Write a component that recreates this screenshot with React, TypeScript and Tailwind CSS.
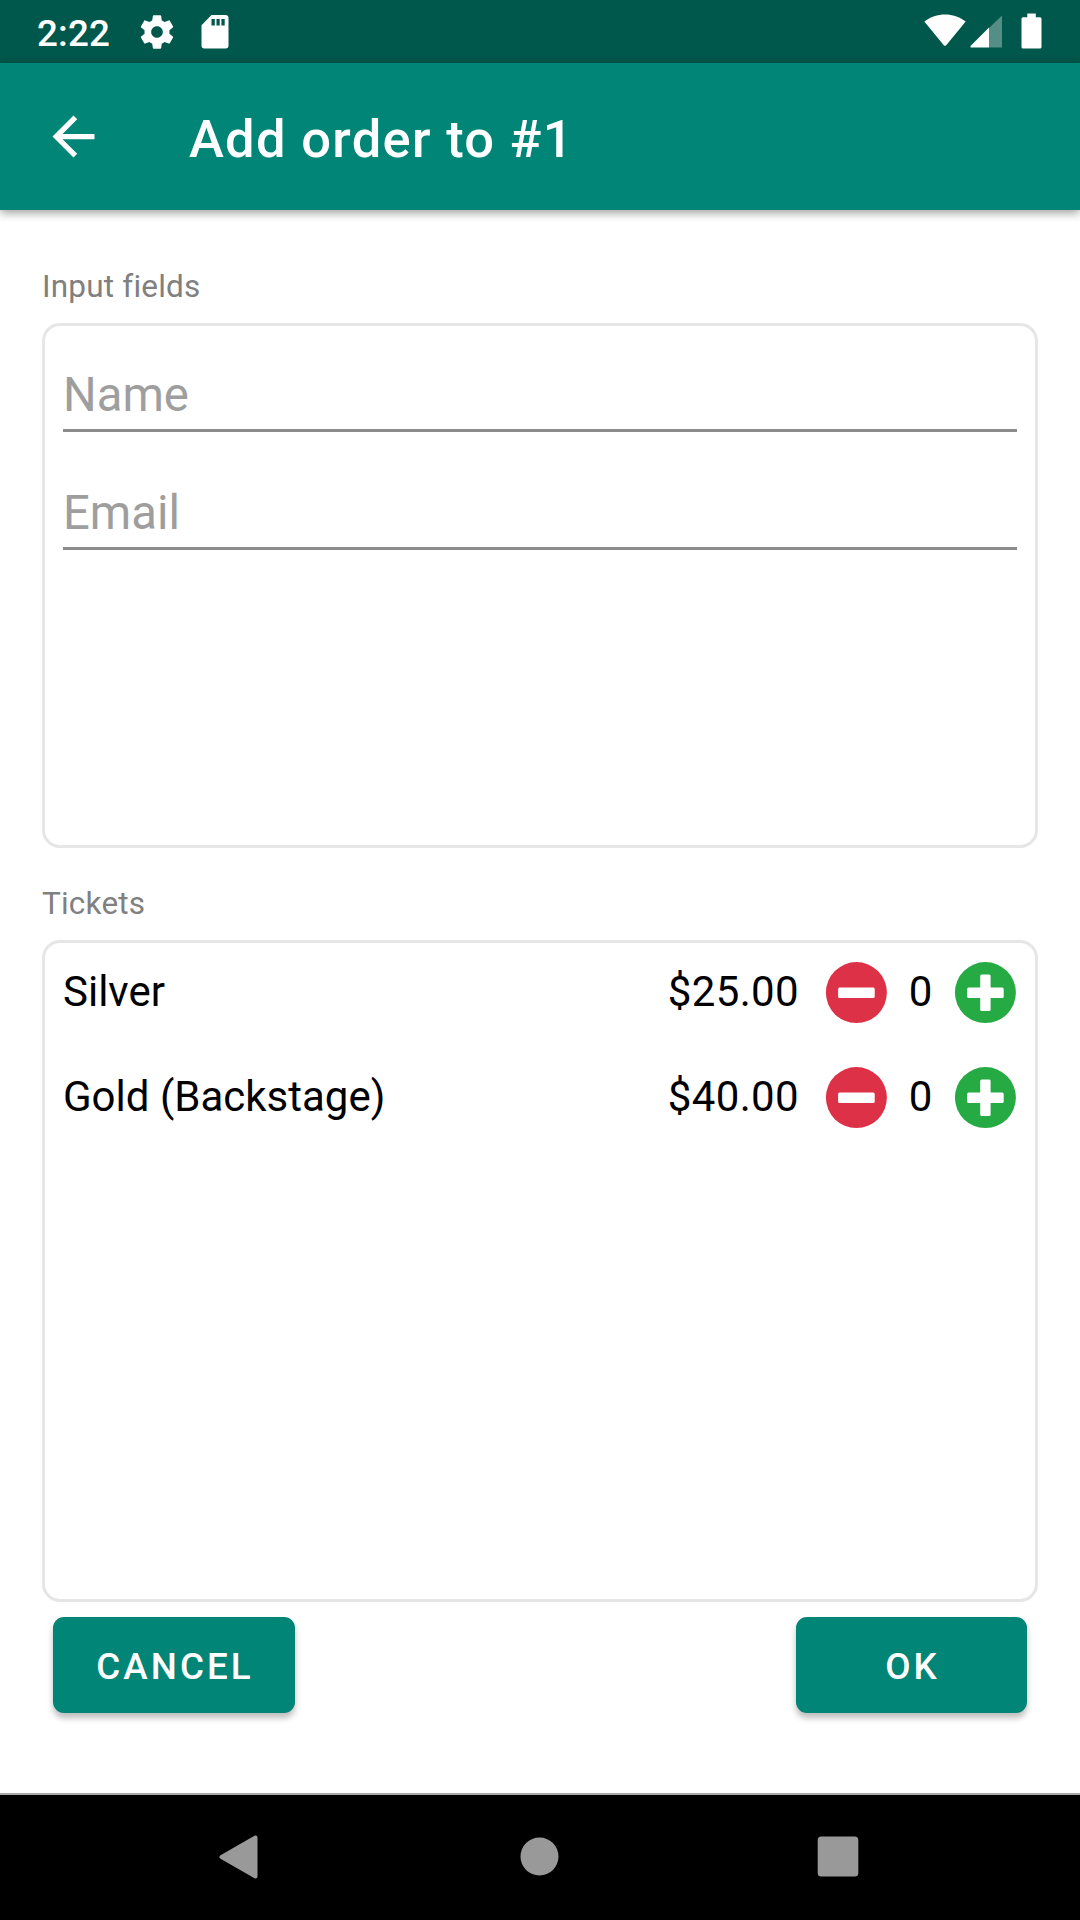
import React from "react";

const tickets = [
  { name: "Silver", price: "$25.00", count: 0 },
  { name: "Gold (Backstage)", price: "$40.00", count: 0 },
];

function StatusBar() {
  return (
    <div className="flex h-[63px] shrink-0 items-start bg-[#00574b] pr-[38px] pl-[37px] text-white">
      <span className="mt-[12px] w-[100px] text-[36.75px] leading-[43px] font-medium tracking-[0.2px]">2:22</span>
      <svg className="mt-[12px] h-[40px] w-[40px]" viewBox="0 0 24 24" fill="currentColor">
        <path d="M19.43 12.98c.04-.32.07-.64.07-.98s-.03-.66-.07-.98l2.11-1.65c.19-.15.24-.42.12-.64l-2-3.46c-.12-.22-.39-.3-.61-.22l-2.49 1c-.52-.4-1.08-.73-1.69-.98l-.38-2.65C14.46 2.18 14.25 2 14 2h-4c-.25 0-.46.18-.49.42l-.38 2.65c-.61.25-1.17.59-1.69.98l-2.49-1c-.23-.09-.49 0-.61.22l-2 3.46c-.13.22-.07.49.12.64l2.11 1.65c-.04.32-.07.65-.07.98s.03.66.07.98l-2.11 1.65c-.19.15-.24.42-.12.64l2 3.46c.12.22.39.3.61.22l2.49-1c.52.4 1.08.73 1.69.98l.38 2.65c.03.24.24.42.49.42h4c.25 0 .46-.18.49-.42l.38-2.65c.61-.25 1.17-.59 1.69-.98l2.49 1c.23.09.49 0 .61-.22l2-3.46c.12-.22.07-.49-.12-.64l-2.11-1.65zM12 15.500c-1.930 0-3.500-1.570-3.500-3.500s1.570-3.500 3.500-3.500 3.500 1.570 3.500 3.500-1.570 3.500-3.500 3.500z" />
      </svg>
      <svg className="mt-[15px] ml-[24px] h-[34px] w-[28px]" viewBox="0 0 28 34" fill="currentColor" fillRule="evenodd">
        <path d="M10.5 0H24.5Q27.5 0 27.5 3V30.500Q27.500 33.500 24.500 33.500H3.500Q.5 33.500 .5 30.500V10.300ZM10.500 4V10.500H13.800V4ZM15.500 4V10.500H18.700V4ZM20.400 4V10.500H23.700V4Z" />
      </svg>
      <svg className="mt-[14px] ml-auto h-[33px] w-[42px]" viewBox="0 0 42 33" fill="currentColor">
        <path d="M.3 7.500C12.500-2 29.500-2 41.700 7.500L22.200 31.200Q21 32.500 19.800 31.200Z" />
      </svg>
      <svg className="mt-[15px] ml-[4px] h-[33px] w-[32px]" viewBox="0 0 32 33" fill="currentColor">
        <path opacity=".33" d="M32 .5V32.500H19V13Z" />
        <path d="M19 12.500V32.500H.5V31Z" />
      </svg>
      <svg className="mt-[13px] ml-[19px] h-[36px] w-[21px]" viewBox="0 0 21 36" fill="currentColor">
        <path d="M6.300 .5H14.800V4.300H19Q20.500 4.300 20.500 5.800V34Q20.500 35.500 19 35.500H2Q.5 35.500 .5 34V5.800Q.5 4.300 2 4.300H6.300Z" />
      </svg>
    </div>
  );
}

function AppBar() {
  return (
    <header className="relative flex h-[147px] shrink-0 items-center bg-[#008577] pl-[42px] text-white shadow-[0_3px_9px_rgba(0,0,0,0.38)]">
      <button aria-label="Back">
        <svg className="block h-[63px] w-[63px]" viewBox="0 0 24 24" fill="currentColor">
          <path d="M20 11H7.830l5.590-5.590L12 4l-8 8 8 8 1.410-1.410L7.830 13H20v-2z" />
        </svg>
      </button>
      <h1 className="mt-[4px] ml-[84px] text-[52.5px] leading-[62px] font-medium tracking-[1.3px]">Add order to #1</h1>
    </header>
  );
}

function Field({ label }: { label: string }) {
  return (
    <div className="flex h-[118px] flex-col justify-end">
      <input
        aria-label={label}
        placeholder={label}
        className="h-[72px] w-full border-b-[3px] border-[#8c8c8c] bg-transparent text-[47.25px] leading-[56px] outline-none placeholder:text-[#9e9e9e]"
      />
    </div>
  );
}

function RoundButton({ kind }: { kind: "minus" | "plus" }) {
  return (
    <button className="block" aria-label={kind === "minus" ? "Remove ticket" : "Add ticket"}>
      <svg className="block h-[62px] w-[62px]" viewBox="0 0 62 62">
        <circle cx="31.400" cy="30.600" r="30.500" fill={kind === "minus" ? "#dc3146" : "#25aa44"} />
        <rect x="13.100" y="25.400" width="36.600" height="10.500" rx="1.500" fill="#fff" />
        {kind === "plus" && <rect x="26.200" y="12.500" width="10.400" height="36.400" rx="1.500" fill="#fff" />}
      </svg>
    </button>
  );
}

export default function App() {
  return (
    <div className="flex h-[1920px] w-[1080px] flex-col overflow-hidden bg-white font-[Roboto,sans-serif]">
      <StatusBar />
      <AppBar />
      <main className="flex flex-1 flex-col px-[42px]">
        <h2 className="mt-[58px] text-[31.5px] leading-[38px] tracking-[0.2px] text-[#808080]">Input fields</h2>
        <section className="mt-[17px] h-[525px] rounded-[18px] border-[3px] border-[#e6e6e6] px-[18px]">
          <div className="-mt-[12px]">
            <Field label="Name" />
            <Field label="Email" />
          </div>
        </section>
        <h2 className="mt-[37px] text-[31.5px] leading-[38px] tracking-[0.2px] text-[#808080]">Tickets</h2>
        <section className="mt-[17px] h-[662px] rounded-[18px] border-[3px] border-[#e6e6e6] px-[18px]">
          <ul className="-mt-[3px] pr-px">
            {tickets.map((t) => (
              <li key={t.name} className="flex h-[105px] items-center text-[42px] leading-[50px] text-black">
                <span className="-mt-[2px] flex-1">{t.name}</span>
                <span className="-mt-[2px] tracking-[0.35px]">{t.price}</span>
                <span className="ml-[26px]"><RoundButton kind="minus" /></span>
                <span className="-mt-[2px] w-[67px] text-center">{t.count}</span>
                <RoundButton kind="plus" />
              </li>
            ))}
          </ul>
        </section>
        <div className="mt-[15px] flex justify-between px-[11px] text-[36.75px] font-medium tracking-[3.1px] text-white">
          <button className="h-[96px] w-[242px] rounded-[11px] bg-[#008577] pt-[3px] pl-[2px] shadow-[0_5px_6px_rgba(0,0,0,0.26)]">CANCEL</button>
          <button className="h-[96px] w-[231px] rounded-[11px] bg-[#008577] pt-[3px] pl-[2px] shadow-[0_5px_6px_rgba(0,0,0,0.26)]">OK</button>
        </div>
      </main>
      <nav className="flex h-[127px] shrink-0 items-center border-t-2 border-[#a8a8a8] bg-black pb-[2px] pl-[219px] text-[#999]">
        <svg className="h-[44px] w-[39px]" viewBox="0 0 39 44" fill="currentColor" stroke="currentColor" strokeWidth="4" strokeLinejoin="round">
          <path d="M2.500 22L36.500 2.500V41.500Z" />
        </svg>
        <svg className="ml-[262px] h-[39px] w-[39px]" viewBox="0 0 39 39" fill="currentColor">
          <circle cx="19.500" cy="19.500" r="19" />
        </svg>
        <svg className="ml-[258px] h-[41px] w-[42px]" viewBox="0 0 42 41" fill="currentColor">
          <rect x=".7" y=".4" width="40.600" height="40.200" rx="3.500" />
        </svg>
      </nav>
    </div>
  );
}
